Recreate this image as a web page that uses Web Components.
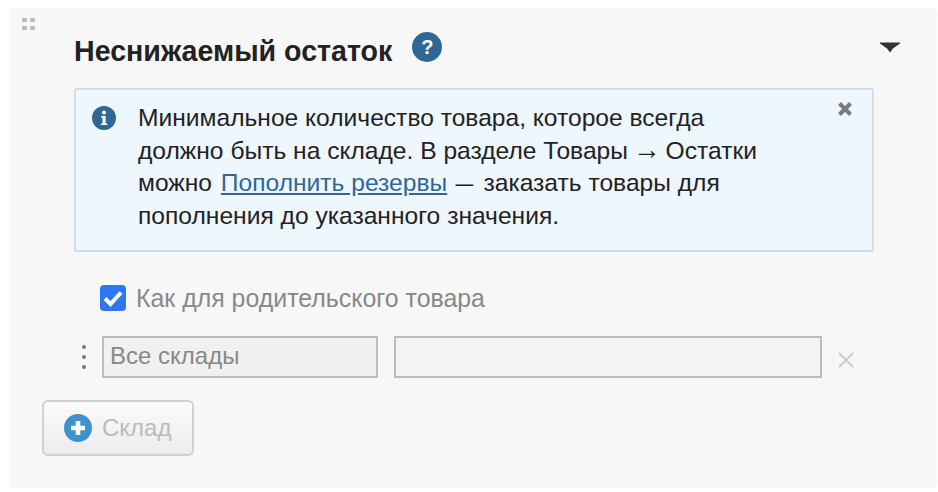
<!DOCTYPE html>
<html>
<head>
<meta charset="utf-8">
<style>
    html, body { margin: 0; padding: 0; background: #fff; }
    body { font-family: "Liberation Sans", Arial, sans-serif; }
    .tight { word-spacing: -2px; }
    .arrow { font-family: "Liberation Serif", serif; font-size: 28px; line-height: 1; }
    .dash { display: inline-block; transform: scaleX(0.72); }
    info-note a { margin: 0 -2px 0 2px; }
</style>
</head>
<body>
<stock-panel>
    <span slot="title">Неснижаемый остаток</span>
    <info-note>
        Минимальное количество товара, которое всегда<br>
        должно быть на складе. В разделе <span class="tight">Товары <span class="arrow">→</span> Остатки</span><br>
        можно <a href="#">Пополнить резервы</a> <span class="dash">—</span> заказать товары для<br>
        пополнения до указанного значения.
    </info-note>
    <check-row>Как для родительского товара</check-row>
    <stock-row value="Все склады"></stock-row>
    <add-button>Склад</add-button>
</stock-panel>

<script>
const panel_template = document.createElement('template');
panel_template.innerHTML = `
<style>
    :host {
        display: block;
        box-sizing: border-box;
        width: 927px;
        height: 480px;
        margin: 8px 0 0 10px;
        background: #f7f7f7;
        border-radius: 4px;
        position: relative;
        padding: 24px 0 0 64px;
    }
    #grip {
        position: absolute;
        left: 12px;
        top: 10px;
        display: block;
    }
    #head {
        display: flex;
        align-items: flex-start;
        width: 826px;
        height: 56px;
    }
    #title {
        font-size: 28.6px;
        font-weight: bold;
        color: #222;
        line-height: 38px;
    }
    #help {
        width: 30px;
        height: 30px;
        border-radius: 50%;
        background: #2f6797;
        color: #fff;
        font-size: 20px;
        font-weight: bold;
        line-height: 30px;
        text-align: center;
        margin-left: 20px;
    }
    #toggle {
        margin-left: auto;
        margin-top: 10px;
    }
</style>
<svg id="grip" width="14" height="14" viewBox="0 0 14 14" fill="#bbb">
    <rect x="0" y="0" width="5" height="4" rx="1"/><rect x="8" y="0" width="5" height="4" rx="1"/>
    <rect x="0" y="8" width="5" height="4" rx="1"/><rect x="8" y="8" width="5" height="4" rx="1"/>
</svg>
<div id="head">
    <div id="title"><slot name="title"></slot></div>
    <div id="help">?</div>
    <svg id="toggle" width="20" height="11" viewBox="0 0 20 11"><path d="M0 0.500H20V1.500L13 6.500 10 10.500 7 6.500 0 1.500Z" fill="#333"/></svg>
</div>
<slot></slot>
`;

class StockPanel extends HTMLElement {
    constructor() {
        super();
        this.attachShadow({ mode: 'open' });
        this.shadowRoot.appendChild(panel_template.content.cloneNode(true));
    }
}

const note_template = document.createElement('template');
note_template.innerHTML = `
<style>
    :host {
        display: flex;
        box-sizing: border-box;
        width: 800px;
        height: 164px;
        background: #eef6fe;
        border: 2px solid #d3dde6;
        border-radius: 3px;
        padding: 12px 0 0 16px;
        font-size: 24.6px;
        line-height: 32.6px;
        color: #222;
    }
    ::slotted(a) { color: #2f6797; }
    #icon {
        flex: none;
        width: 24px;
        height: 24px;
        margin: 4px 22px 0 0;
    }
    #text { flex: 1; }
    #close { flex: none; margin: -1px 19px 0 0; }
</style>
<svg id="icon" viewBox="0 0 24 24">
    <circle cx="12" cy="12" r="12" fill="#2f6797"/>
    <circle cx="12" cy="6.500" r="2" fill="#fff"/>
    <path d="M9 10h4.600v7.400H15.300V19H9v-1.600h1.500V11.600H9Z" fill="#fff"/>
</svg>
<div id="text"><slot></slot></div>
<svg id="close" width="16" height="16" viewBox="0 0 16 16"><path d="M2.500 2.500L13.500 13.500M13.500 2.500L2.500 13.500" stroke="#7b7b7b" stroke-width="4"/></svg>
`;

class InfoNote extends HTMLElement {
    constructor() {
        super();
        this.attachShadow({ mode: 'open' });
        this.shadowRoot.appendChild(note_template.content.cloneNode(true));
    }
}

const check_template = document.createElement('template');
check_template.innerHTML = `
<style>
    :host {
        display: flex;
        align-items: center;
        margin: 32px 0 0 26px;
        height: 28px;
        color: #888;
        font-size: 24.9px;
    }
    #box {
        width: 26px;
        height: 26px;
        border-radius: 4px;
        background: #2f76f5;
        margin-right: 10px;
    }
    svg { display: block; }
</style>
<div id="box">
    <svg width="26" height="26" viewBox="0 0 26 26"><path d="M5 13.500L10.500 19 21 7.500" fill="none" stroke="#fff" stroke-width="4"/></svg>
</div>
<slot></slot>
`;

class CheckRow extends HTMLElement {
    constructor() {
        super();
        this.attachShadow({ mode: 'open' });
        this.shadowRoot.appendChild(check_template.content.cloneNode(true));
    }
}

const row_template = document.createElement('template');
row_template.innerHTML = `
<style>
    :host {
        display: flex;
        align-items: flex-start;
        margin: 24px 0 0 8px;
    }
    #dots {
        flex: none;
        width: 4px;
        margin-right: 16px;
        margin-top: 9px;
        display: flex;
        flex-direction: column;
        gap: 6px;
    }
    #dots i {
        display: block;
        width: 4px;
        height: 4px;
        border-radius: 50%;
        background: #777;
    }
    .field {
        box-sizing: border-box;
        height: 42px;
        border: 2px solid #bcbcbc;
        font-size: 24px;
        line-height: 36px;
        padding-left: 6px;
        color: #888;
    }
    #all { width: 276px; background: #f0f0f0; }
    #val { width: 428px; background: #f3f3f3; margin-left: 16px; }
    #del { flex: none; margin: 15px 0 0 15px; }
</style>
<div id="dots"><i></i><i></i><i></i></div>
<div class="field" id="all"></div>
<div class="field" id="val"></div>
<svg id="del" width="18" height="18" viewBox="0 0 18 18"><path d="M2 2L16 16M16 2L2 16" stroke="#ccc" stroke-width="2"/></svg>
`;

class StockRow extends HTMLElement {
    constructor() {
        super();
        this.attachShadow({ mode: 'open' });
        this.shadowRoot.appendChild(row_template.content.cloneNode(true));
    }

    connectedCallback() {
        this.shadowRoot.querySelector('#all').textContent = this.getAttribute('value');
    }
}

const add_template = document.createElement('template');
add_template.innerHTML = `
<style>
    :host {
        display: flex;
        align-items: center;
        box-sizing: border-box;
        width: 152px;
        height: 56px;
        margin: 22px 0 0 -32px;
        border: 2px solid #d0d0d0;
        border-radius: 6px;
        background: linear-gradient(#fbfbfb, #ececec);
        padding-left: 20px;
        color: #bbb;
        font-size: 24px;
    }
    svg { display: block; margin-right: 10px; }
</style>
<svg width="28" height="28" viewBox="0 0 28 28">
    <circle cx="14" cy="14" r="14" fill="#3f92cf"/>
    <path d="M14 7V21M7 14H21" stroke="#fff" stroke-width="4.500"/>
</svg>
<slot></slot>
`;

class AddButton extends HTMLElement {
    constructor() {
        super();
        this.attachShadow({ mode: 'open' });
        this.shadowRoot.appendChild(add_template.content.cloneNode(true));
    }
}

customElements.define('stock-panel', StockPanel);
customElements.define('info-note', InfoNote);
customElements.define('check-row', CheckRow);
customElements.define('stock-row', StockRow);
customElements.define('add-button', AddButton);
</script>
</body>
</html>
